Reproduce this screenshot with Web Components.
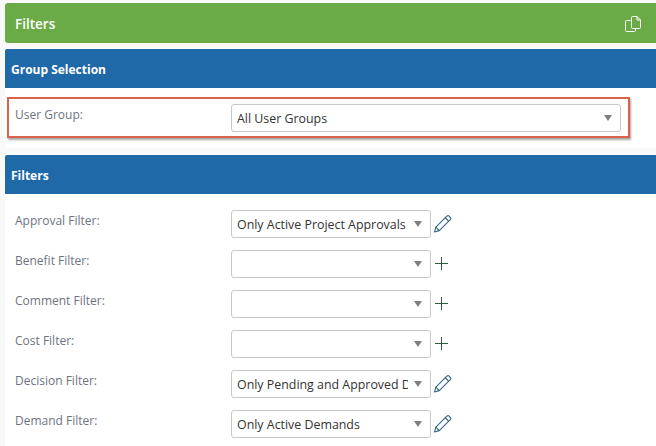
<!DOCTYPE html>
<html lang="en">
<head>
<meta charset="utf-8">
<title>Filters</title>
<style>
  html, body { margin: 0; height: 446px; overflow: hidden; }
  body { background: #f9f9f9; font-family: "Open Sans", "Liberation Sans", sans-serif; padding: 3px 0 0 5px; box-sizing: border-box; }
</style>
</head>
<body>
<filter-app></filter-app>

<script>
function makeTemplate(html) {
  const template = document.createElement("template");
  template.innerHTML = html;
  return template;
}

function shadowFrom(el, template) {
  const shadow = el.attachShadow({ mode: "open" });
  shadow.appendChild(template.content.cloneNode(true));
  return shadow;
}

const titleBarTemplate = makeTemplate(`
  <style>
    :host {
      display: flex;
      align-items: center;
      justify-content: space-between;
      height: 40px;
      padding: 0 14px 0 10px;
      background: #6aaa47;
      border-radius: 3px 0 0 3px;
      color: #fff;
      font-size: 13.5px;
      font-weight: 600;
    }
    slot { display: block; padding-top: 2px; }
    svg { display: block; }
  </style>
  <slot></slot>
  <svg width="18" height="20" viewBox="0 0 18 20" fill="none" stroke="#fff" stroke-width="1">
    <path d="M6.500 7.500h-4a1 1 0 0 0-1 1v9a1 1 0 0 0 1 1h8a1 1 0 0 0 1-1v-2.500"/>
    <path d="M7.500 4.500a1 1 0 0 1 1-1h4.500l3.500 3.500v7.500a1 1 0 0 1-1 1h-7a1 1 0 0 1-1-1z"/>
    <path d="M13 3.500v3.500h3.500"/>
  </svg>
`);

class TitleBar extends HTMLElement {
  constructor() {
    super();
    shadowFrom(this, titleBarTemplate);
  }
}
customElements.define("title-bar", TitleBar);

const panelTemplate = makeTemplate(`
  <style>
    :host { display: block; background: #fff; }
    header {
      height: 39px;
      display: flex;
      align-items: center;
      padding: 1px 0 0 6px;
      box-sizing: border-box;
      background: #1f69a8;
      border-radius: 2px 0 0 0;
      color: #fff;
      font-size: 12px;
      font-weight: 700;
    }
  </style>
  <header></header>
  <slot></slot>
`);

class FilterPanel extends HTMLElement {
  constructor() {
    super();
    shadowFrom(this, panelTemplate);
  }
  connectedCallback() {
    this.shadowRoot.querySelector("header").textContent = this.getAttribute("heading");
  }
}
customElements.define("filter-panel", FilterPanel);

const selectTemplate = makeTemplate(`
  <style>
    :host {
      display: flex;
      align-items: center;
      box-sizing: border-box;
      width: var(--select-width, 200px);
      height: 28px;
      padding: 0 8px 0 5px;
      background: #fff;
      border: 1px solid #c8c8c8;
      border-radius: 3px;
      color: #333;
      font-size: 12.4px;
    }
    span { flex: 1; min-width: 0; overflow: hidden; white-space: nowrap; margin-right: 6px; }
    i {
      flex: none;
      width: 0;
      height: 0;
      border-left: 4px solid transparent;
      border-right: 4px solid transparent;
      border-top: 6px solid #808080;
    }
  </style>
  <span></span><i></i>
`);

class FilterSelect extends HTMLElement {
  constructor() {
    super();
    shadowFrom(this, selectTemplate);
  }
  connectedCallback() {
    this.shadowRoot.querySelector("span").textContent = this.getAttribute("value") || "";
  }
}
customElements.define("filter-select", FilterSelect);

const actionIcons = {
  edit: `<svg width="18" height="18" viewBox="1 1 16.500 16.500" fill="none" stroke="#2a6496" stroke-width="1" stroke-linejoin="round">
      <path d="M1.500 16.500l1.200-4.300L12.800 2.100a1.500 1.500 0 0 1 2.100 0l1 1a1.500 1.500 0 0 1 0 2.100L5.800 15.300z"/>
      <path d="M11.300 3.600l3.100 3.100M2.700 12.200l3.100 3.100" stroke="#3a5a4a"/>
    </svg>`,
  add: `<svg width="18" height="18" viewBox="0 0 18 18" fill="none" stroke="#2f5d3a" stroke-width="1">
      <path d="M7.500 2v13M1 8.500h13"/>
    </svg>`
};

class FilterAction extends HTMLElement {
  connectedCallback() {
    if (this.shadowRoot) return;
    const shadow = this.attachShadow({ mode: "open" });
    shadow.innerHTML = `<style>:host { display: block; width: 18px; height: 18px; } svg { display: block; }</style>`
      + actionIcons[this.getAttribute("kind")];
  }
}
customElements.define("filter-action", FilterAction);

const fieldTemplate = makeTemplate(`
  <style>
    :host {
      display: flex;
      align-items: flex-start;
      height: 28px;
      color: #6d7480;
      font-size: 12px;
    }
    label { width: 216px; flex: none; line-height: 16px; margin-top: 3px; }
    .wrap { display: flex; align-items: center; gap: 3px; }
  </style>
  <label></label>
  <div class="wrap"><filter-select></filter-select></div>
`);

class FilterField extends HTMLElement {
  constructor() {
    super();
    shadowFrom(this, fieldTemplate);
  }
  connectedCallback() {
    const shadow = this.shadowRoot;
    shadow.querySelector("label").textContent = this.getAttribute("label");
    shadow.querySelector("filter-select").setAttribute("value", this.getAttribute("value") || "");
    shadow.querySelector("filter-select").connectedCallback();
    if (this.hasAttribute("action") && !shadow.querySelector("filter-action")) {
      const action = document.createElement("filter-action");
      action.setAttribute("kind", this.getAttribute("action"));
      shadow.querySelector(".wrap").appendChild(action);
    }
  }
}
customElements.define("filter-field", FilterField);

const appTemplate = makeTemplate(`
  <style>
    :host { display: flex; flex-direction: column; }
    title-bar { margin-bottom: 6px; }
    .highlight {
      display: block;
      margin: 9px 26px 0 2px;
      padding: 5px 8px 4px 6px;
      border: 2px solid #d9634a;
      box-shadow: 1px 2px 2px rgba(0, 0, 0, .35);
      --select-width: 390px;
    }
    .group { padding-bottom: 10px; margin-bottom: 7px; }
    .rows { display: flex; flex-direction: column; gap: 12px; padding: 16px 0 20px 10px; }
  </style>
  <title-bar>Filters</title-bar>
  <filter-panel heading="Group Selection" class="group">
    <div class="highlight">
      <filter-field label="User Group:" value="All User Groups"></filter-field>
    </div>
  </filter-panel>
  <filter-panel heading="Filters">
    <div class="rows">
      <filter-field label="Approval Filter:" value="Only Active Project Approvals" action="edit"></filter-field>
      <filter-field label="Benefit Filter:" action="add"></filter-field>
      <filter-field label="Comment Filter:" action="add"></filter-field>
      <filter-field label="Cost Filter:" action="add"></filter-field>
      <filter-field label="Decision Filter:" value="Only Pending and Approved Decisions" action="edit"></filter-field>
      <filter-field label="Demand Filter:" value="Only Active Demands" action="edit"></filter-field>
    </div>
  </filter-panel>
`);

class FilterApp extends HTMLElement {
  constructor() {
    super();
    shadowFrom(this, appTemplate);
  }
}
customElements.define("filter-app", FilterApp);
</script>
</body>
</html>
